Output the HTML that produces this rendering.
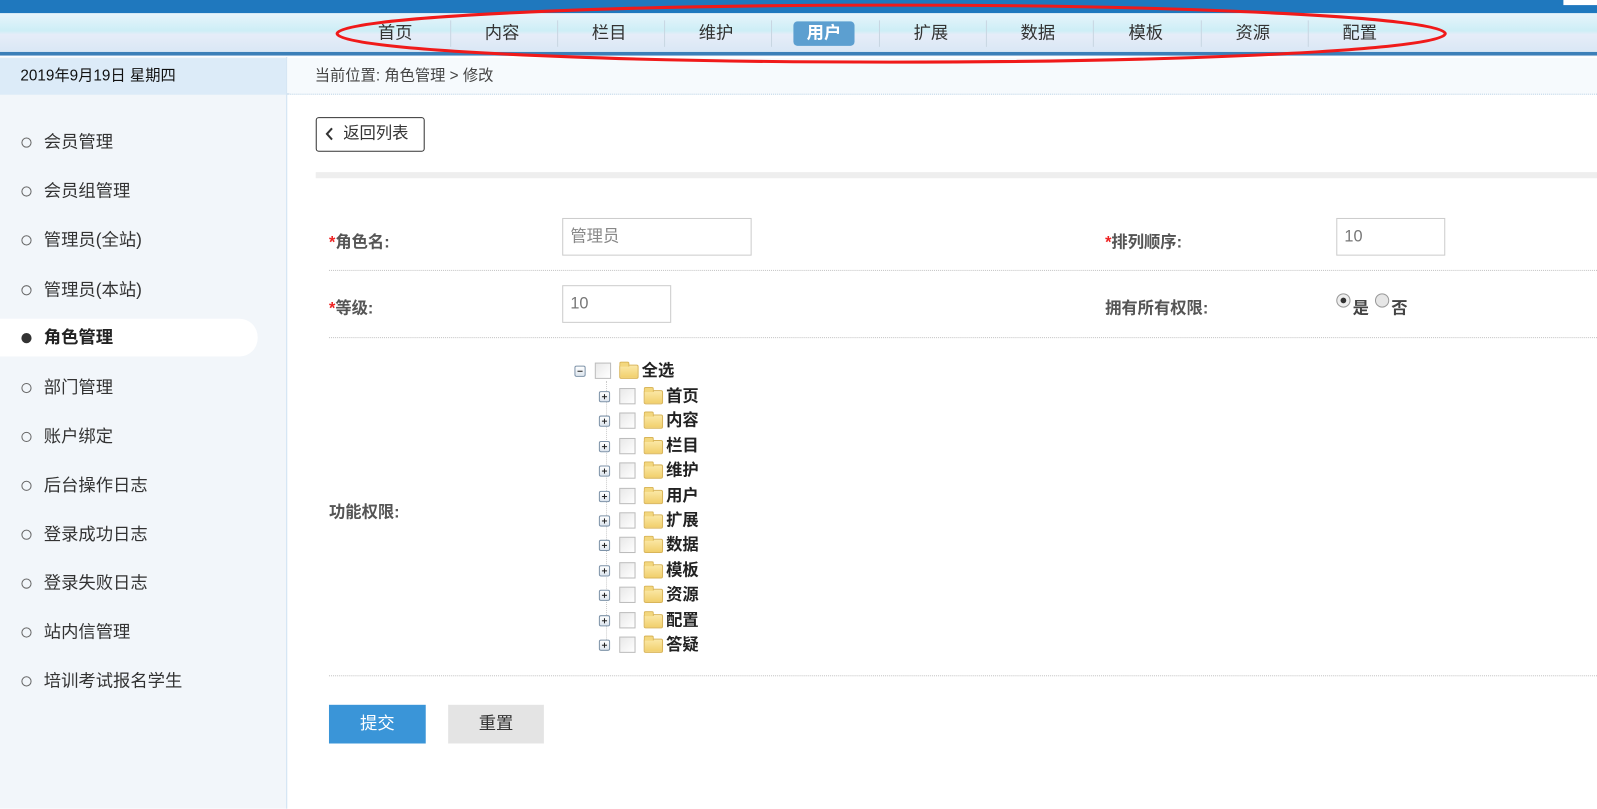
<!DOCTYPE html>
<html><head><meta charset="utf-8"><style>
*{margin:0;padding:0;box-sizing:border-box}
html,body{width:1597px;height:809px;overflow:hidden;background:#fff;font-family:"Liberation Sans","Noto Sans CJK SC",sans-serif}
#w{position:absolute;left:0;top:0;width:1568px;height:794px;transform:scale(1.0185);transform-origin:0 0}
.a{position:absolute}
.top{left:0;top:0;width:1568px;height:13px;background:#1f78be}
.nav{left:0;top:13px;width:1568px;height:38px;background:linear-gradient(#e8f4fb,#cdeef6 45%,#e6edf8 55%,#d9e7f5)}
.navline{left:0;top:51px;width:1568px;height:4px;background:#3b7fb8;border-bottom:1px solid #8fb5d8}
.ni{top:22px;font-size:17px;color:#333;width:60px;text-align:center;line-height:22px}
.sep{top:20px;width:1px;height:26px;background:#c8d6e2}
.side{left:0;top:56px;width:282px;height:738px;background:#f2f6fa;border-right:1px solid #cfe2f3}
.date{left:0;top:57px;width:281px;height:36px;background:#dcebf8;font-size:15px;line-height:36px;padding-left:20px;color:#111}
.bc{left:282px;top:57px;width:1286px;height:36px;background:#f6fafd;border-bottom:1px dotted #bcd3e6;font-size:15px;line-height:36px;padding-left:27px;color:#444}
.si{left:0;width:253px;height:37px;font-size:17px;color:#333;line-height:37px;padding-left:43px}
.si:before{content:"";position:absolute;left:21px;top:14px;width:8px;height:8px;border:1.5px solid #666;border-radius:50%}
.si.on{background:#fff;border-radius:0 18px 18px 0;font-weight:bold;color:#222}
.si.on:before{background:#333;border-color:#333}
.lbl{font-size:16px;font-weight:bold;color:#555}
.lbl b{color:#e22}
.inp{border:1px solid #ccc;background:#fff;font-size:16px;color:#777;padding-left:7px}
.dot{height:0;border-top:1px dotted #c3c3c3}
.tr{font-size:16px;font-weight:bold;color:#222;height:24px;line-height:22px}
.pm{position:absolute;top:5px;width:11px;height:11px;border:1px solid #7d92a8;background:linear-gradient(#fff,#dde5ee);border-radius:2px}
.pm:before{content:"";position:absolute;left:2px;top:4px;width:5px;height:1px;background:#222}
.pm.p:after{content:"";position:absolute;left:4px;top:2px;width:1px;height:5px;background:#222}
.cb{position:absolute;top:2px;width:16px;height:16px;border:1px solid #bbb;background:linear-gradient(135deg,#e8e8e8,#fff)}
.fd{position:absolute;top:4px;width:19px;height:14px;background:linear-gradient(#fbe8a6,#f1cf6c);border:1px solid #d9b559;border-radius:2px}
.fd:before{content:"";position:absolute;left:-1px;top:-4px;width:8px;height:4px;background:#f3d77e;border:1px solid #d9b559;border-bottom:none;border-radius:2px 2px 0 0}
</style></head><body><div id="w">
<div class="a top"></div>
<div class="a" style="left:1535px;top:0;width:33px;height:5px;background:#fff"></div>
<div class="a nav"></div>
<div class="a navline"></div>
<div class="a ni" style="left:358px">首页</div>
<div class="a ni" style="left:463px">内容</div>
<div class="a ni" style="left:568px">栏目</div>
<div class="a ni" style="left:673px">维护</div>
<div class="a" style="left:779px;top:21px;width:60px;height:24px;background:#5c9fd0;border-radius:4px;color:#fff;font-weight:bold;font-size:17px;text-align:center;line-height:24px">用户</div>
<div class="a ni" style="left:884px">扩展</div>
<div class="a ni" style="left:989px">数据</div>
<div class="a ni" style="left:1095px">模板</div>
<div class="a ni" style="left:1200px">资源</div>
<div class="a ni" style="left:1305px">配置</div>
<div class="a sep" style="left:442px"></div><div class="a sep" style="left:547px"></div><div class="a sep" style="left:652px"></div><div class="a sep" style="left:757px"></div><div class="a sep" style="left:863px"></div><div class="a sep" style="left:968px"></div><div class="a sep" style="left:1073px"></div><div class="a sep" style="left:1179px"></div><div class="a sep" style="left:1284px"></div>
<div class="a side"></div>
<div class="a date">2019年9月19日 星期四</div>
<div class="a bc">当前位置: 角色管理 &gt; 修改</div>
<svg class="a" style="left:0;top:0" width="1568" height="80"><ellipse cx="875" cy="33" rx="544" ry="28" fill="none" stroke="#f01a1a" stroke-width="3"/></svg>
<div class="a si" style="top:121px">会员管理</div>
<div class="a si" style="top:169px">会员组管理</div>
<div class="a si" style="top:217px">管理员(全站)</div>
<div class="a si" style="top:266px">管理员(本站)</div>
<div class="a si on" style="top:313px">角色管理</div>
<div class="a si" style="top:362px">部门管理</div>
<div class="a si" style="top:410px">账户绑定</div>
<div class="a si" style="top:458px">后台操作日志</div>
<div class="a si" style="top:506px">登录成功日志</div>
<div class="a si" style="top:554px">登录失败日志</div>
<div class="a si" style="top:602px">站内信管理</div>
<div class="a si" style="top:650px">培训考试报名学生</div>
<div class="a" style="left:310px;top:115px;width:107px;height:34px;border:1px solid #333;border-radius:3px;font-size:16px;line-height:32px;padding-left:26px;color:#333">返回列表</div>
<svg class="a" style="left:318px;top:124px" width="12" height="16"><path d="M8 2L3 7.5L8 13" fill="none" stroke="#333" stroke-width="2"/></svg>
<div class="a" style="left:310px;top:169px;width:1258px;height:6px;background:#eee"></div>
<div class="a lbl" style="left:323px;top:224px"><b>*</b>角色名:</div>
<div class="a inp" style="left:552px;top:214px;width:186px;height:37px;line-height:35px;color:#888">管理员</div>
<div class="a lbl" style="left:1085px;top:224px"><b>*</b>排列顺序:</div>
<div class="a inp" style="left:1312px;top:214px;width:107px;height:37px;line-height:35px">10</div>
<div class="a dot" style="left:323px;top:265px;width:1245px"></div>
<div class="a lbl" style="left:323px;top:289px"><b>*</b>等级:</div>
<div class="a inp" style="left:552px;top:280px;width:107px;height:37px;line-height:35px">10</div>
<div class="a lbl" style="left:1085px;top:289px">拥有所有权限:</div>
<div class="a" style="left:1312px;top:288px;width:14px;height:14px;border:1px solid #999;border-radius:50%;background:radial-gradient(#333 30%,#eee 35%)"></div>
<div class="a lbl" style="left:1328px;top:289px;color:#444">是</div>
<div class="a" style="left:1350px;top:288px;width:14px;height:14px;border:1px solid #999;border-radius:50%;background:#e6e6e6"></div>
<div class="a lbl" style="left:1366px;top:289px;color:#444">否</div>
<div class="a dot" style="left:323px;top:331px;width:1245px"></div>
<div class="a lbl" style="left:323px;top:489px">功能权限:</div>
<div class="a" style="left:564px;top:354px;width:200px;height:300px">
<div class="a tr" style="left:0;top:0;width:200px"><span class="pm"></span><span class="cb" style="left:20px"></span><span class="fd" style="left:44px"></span><span style="position:absolute;left:66px">全选</span></div>
<div class="a" style="left:31px;top:20px;width:0;height:260px;border-left:1px dotted #ccc"></div>
</div>
<div class="a" style="left:588px;top:379px;width:200px;height:270px">
<div class="a tr" style="top:0"><span class="pm p"></span><span class="cb" style="left:20px"></span><span class="fd" style="left:44px"></span><span style="position:absolute;left:66px;white-space:nowrap">首页</span></div>
<div class="a tr" style="top:24.4px"><span class="pm p"></span><span class="cb" style="left:20px"></span><span class="fd" style="left:44px"></span><span style="position:absolute;left:66px;white-space:nowrap">内容</span></div>
<div class="a tr" style="top:48.8px"><span class="pm p"></span><span class="cb" style="left:20px"></span><span class="fd" style="left:44px"></span><span style="position:absolute;left:66px;white-space:nowrap">栏目</span></div>
<div class="a tr" style="top:73.2px"><span class="pm p"></span><span class="cb" style="left:20px"></span><span class="fd" style="left:44px"></span><span style="position:absolute;left:66px;white-space:nowrap">维护</span></div>
<div class="a tr" style="top:97.6px"><span class="pm p"></span><span class="cb" style="left:20px"></span><span class="fd" style="left:44px"></span><span style="position:absolute;left:66px;white-space:nowrap">用户</span></div>
<div class="a tr" style="top:122px"><span class="pm p"></span><span class="cb" style="left:20px"></span><span class="fd" style="left:44px"></span><span style="position:absolute;left:66px;white-space:nowrap">扩展</span></div>
<div class="a tr" style="top:146.4px"><span class="pm p"></span><span class="cb" style="left:20px"></span><span class="fd" style="left:44px"></span><span style="position:absolute;left:66px;white-space:nowrap">数据</span></div>
<div class="a tr" style="top:170.8px"><span class="pm p"></span><span class="cb" style="left:20px"></span><span class="fd" style="left:44px"></span><span style="position:absolute;left:66px;white-space:nowrap">模板</span></div>
<div class="a tr" style="top:195.2px"><span class="pm p"></span><span class="cb" style="left:20px"></span><span class="fd" style="left:44px"></span><span style="position:absolute;left:66px;white-space:nowrap">资源</span></div>
<div class="a tr" style="top:219.6px"><span class="pm p"></span><span class="cb" style="left:20px"></span><span class="fd" style="left:44px"></span><span style="position:absolute;left:66px;white-space:nowrap">配置</span></div>
<div class="a tr" style="top:244px"><span class="pm p"></span><span class="cb" style="left:20px"></span><span class="fd" style="left:44px"></span><span style="position:absolute;left:66px;white-space:nowrap">答疑</span></div>
</div>
<div class="a dot" style="left:323px;top:663px;width:1245px"></div>
<div class="a" style="left:323px;top:692px;width:95px;height:38px;background:#3a95d8;color:#fff;font-size:17px;text-align:center;line-height:38px">提交</div>
<div class="a" style="left:440px;top:692px;width:94px;height:38px;background:#e4e4e4;color:#333;font-size:17px;text-align:center;line-height:38px">重置</div>
</div></body></html>
